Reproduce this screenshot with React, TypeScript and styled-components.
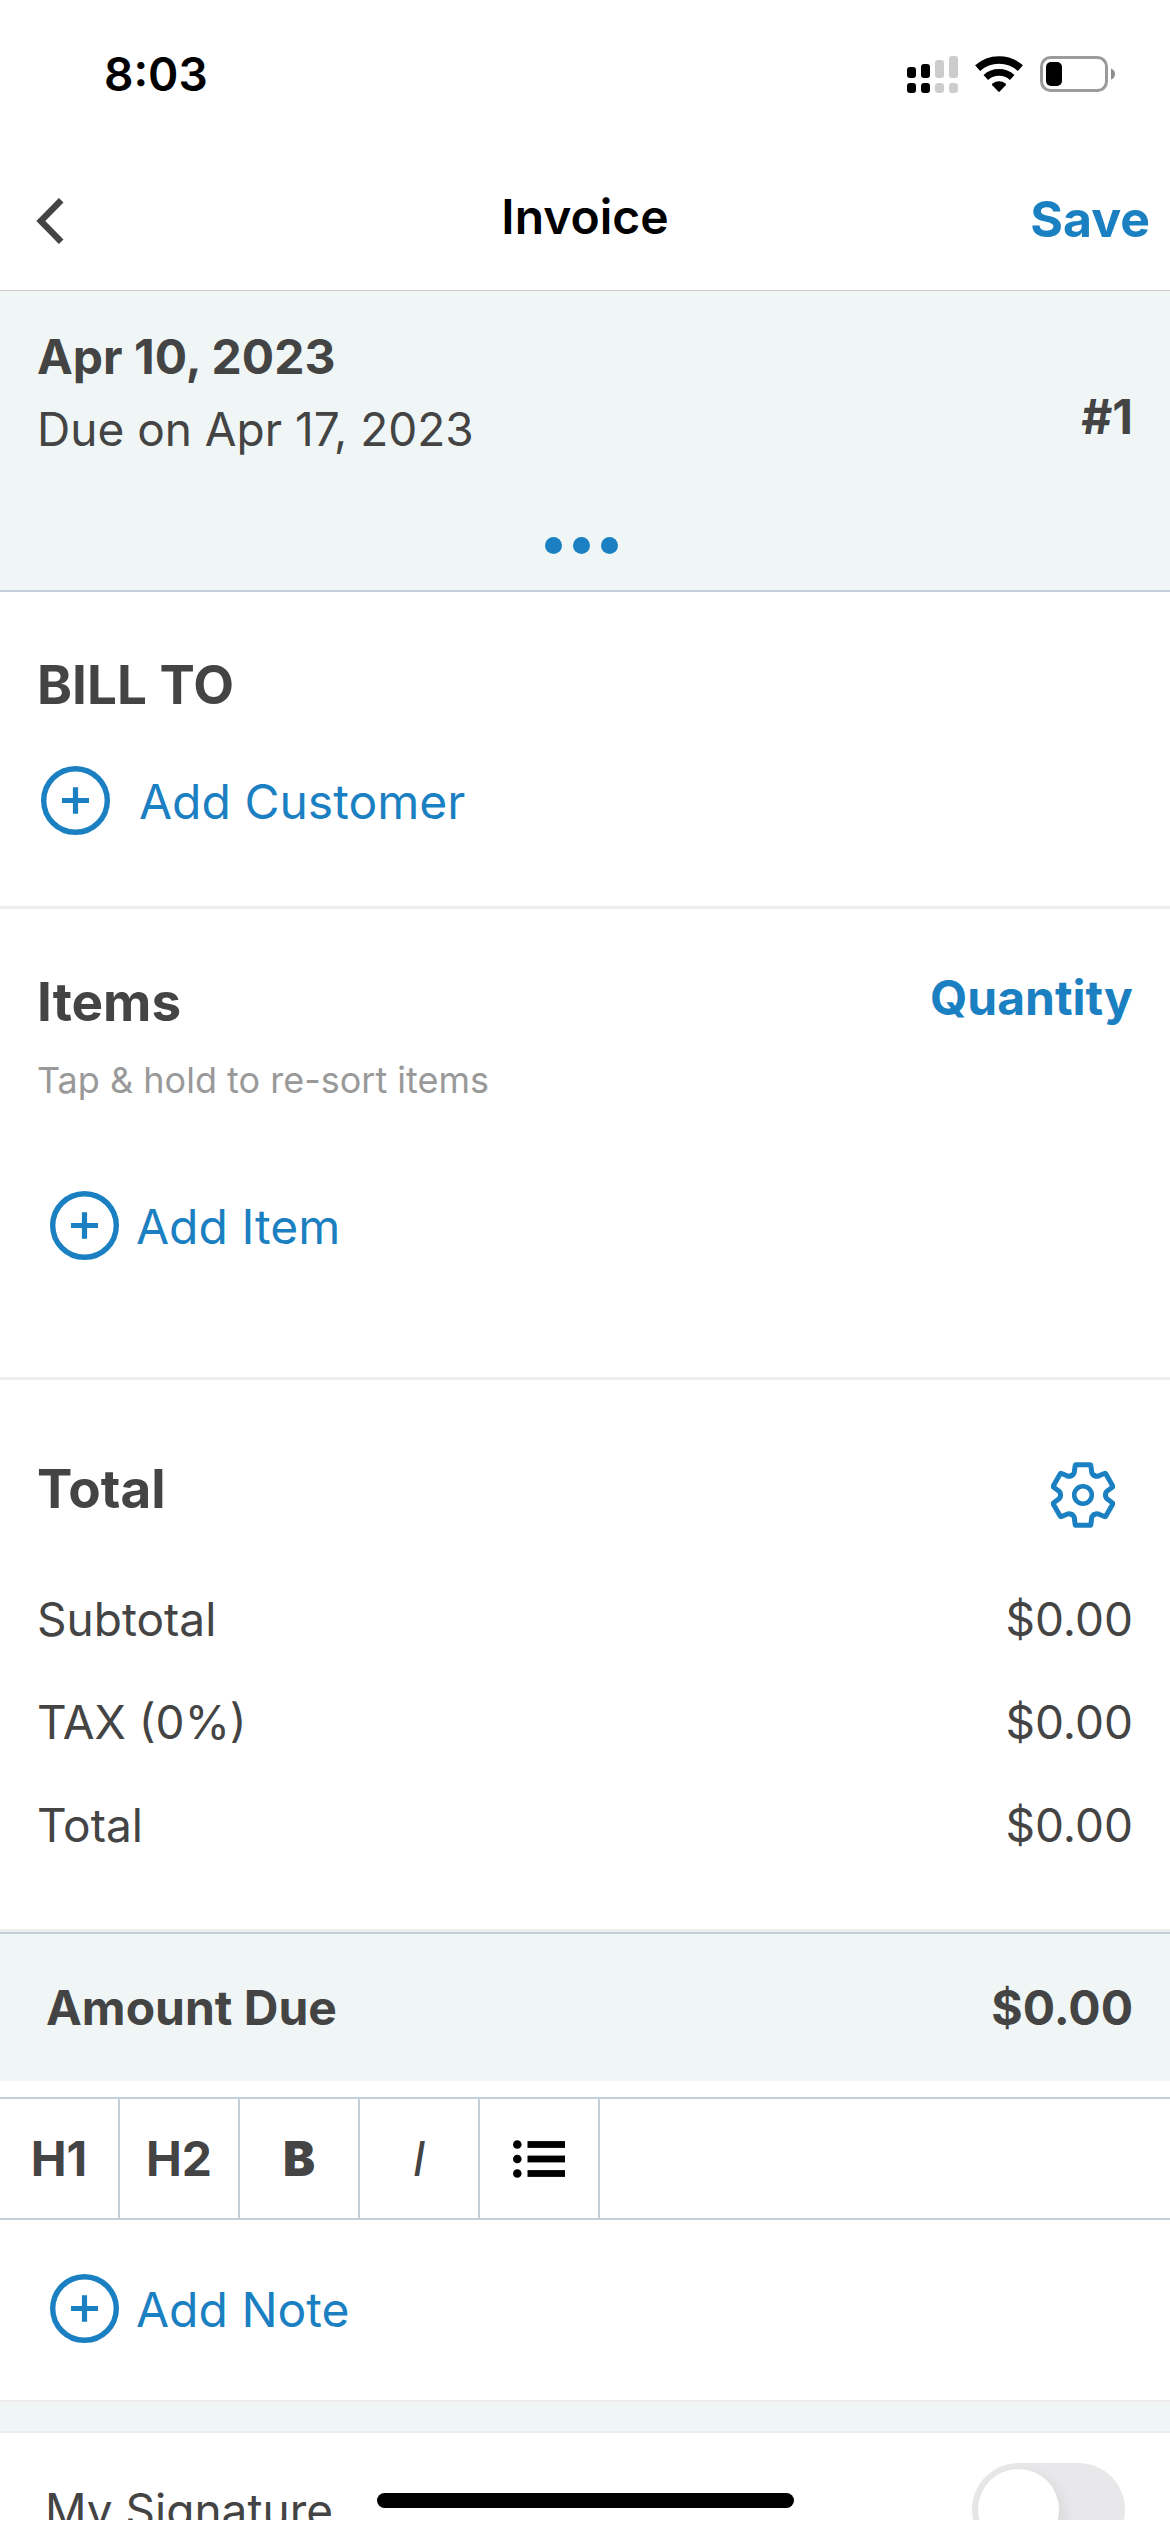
import React, { useState } from "react";
import styled, { createGlobalStyle } from "styled-components";

const color = {
  blue: "#1a80c1",
  text: "#444444",
  muted: "#999999",
  tint: "#f0f6f6",
  rule: "#c4d0d9",
  divider: "#ededed",
};

const GlobalStyle = createGlobalStyle`
  *, *::before, *::after { box-sizing: border-box; }
  body {
    margin: 0;
    background: #ffffff;
    color: ${color.text};
    font-family: Inter, "Liberation Sans", sans-serif;
    font-size: 46px;
  }
  h1, h2, p, dl, dt, dd { margin: 0; }
  button {
    margin: 0;
    padding: 0;
    border: 0;
    background: none;
    color: inherit;
    font: inherit;
    cursor: pointer;
  }
  svg { display: block; flex: none; }
`;

const Screen = styled.div`
  position: relative;
  display: flex;
  flex-direction: column;
  height: 100vh;
  padding-bottom: 12px;
  overflow: hidden;
`;

const StatusBar = styled.div`
  flex: none;
  display: flex;
  align-items: center;
  justify-content: space-between;
  height: 148px;
  padding: 0 55px 0 104px;
  color: #000000;
`;

const Clock = styled.time`
  font-size: 46px;
  font-weight: 600;
`;

const StatusIcons = styled.div`
  display: flex;
  align-items: center;
  gap: 17px;
`;

const NavBar = styled.header`
  flex: none;
  display: grid;
  grid-template-columns: 1fr auto 1fr;
  align-items: center;
  height: 143px;
  padding: 0 20px;
  border-bottom: 1px solid #c5cacb;
`;

const BackButton = styled.button`
  justify-self: start;
  padding: 4px 16px 0;
`;

const Title = styled.h1`
  padding-bottom: 6px;
  color: #000000;
  font-size: 48px;
  font-weight: 600;
`;

const SaveButton = styled.button`
  justify-self: end;
  color: ${color.blue};
  font-size: 50px;
  font-weight: 700;
`;

const Content = styled.main`
  flex: 1;
  min-height: 0;
  overflow: hidden;
`;

const Summary = styled.section`
  padding: 29px 37px 0;
  border-bottom: 2px solid ${color.rule};
  background: ${color.tint};
`;

const SplitRow = styled.div<{ $align?: string }>`
  display: flex;
  align-items: ${(p) => p.$align ?? "center"};
  justify-content: space-between;
`;

const IssueDate = styled.p`
  font-size: 48px;
  font-weight: 700;
  line-height: 73px;
`;

const DueDate = styled.p`
  font-size: 46px;
  line-height: 73px;
`;

const InvoiceNumber = styled.span`
  padding-top: 46px;
  font-size: 48px;
  font-weight: 700;
`;

const MoreButton = styled.button`
  display: flex;
  align-items: center;
  justify-content: center;
  gap: 11px;
  width: 100%;
  height: 124px;
  padding: 34px 8px 0 0;
`;

const Dot = styled.span`
  width: 17px;
  height: 17px;
  border-radius: 50%;
  background: ${color.blue};
`;

const Section = styled.section<{ $top: number; $bottom: number }>`
  padding: ${(p) => p.$top}px 37px ${(p) => p.$bottom}px;
  border-bottom: 3px solid ${color.divider};
`;

const Heading = styled.h2`
  font-size: 53px;
  font-weight: 700;
  line-height: 64px;
`;

const QuantityButton = styled.button`
  padding-bottom: 8px;
  color: ${color.blue};
  font-size: 48px;
  font-weight: 700;
  line-height: 56px;
`;

const Hint = styled.p`
  padding: 22px 0 87px;
  color: ${color.muted};
  font-size: 36px;
  line-height: 48px;
`;

const AddButton = styled.button<{ $gap: number; $inset: number }>`
  display: flex;
  align-items: center;
  gap: ${(p) => p.$gap}px;
  padding-left: ${(p) => p.$inset}px;
  color: ${color.blue};
  font-size: 48px;
  line-height: 64px;
`;

const AddLabel = styled.span`
  padding-top: 2px;
`;

const BillTo = styled.div`
  display: grid;
  justify-items: start;
  gap: 49px;
`;

const SettingsButton = styled.button`
  padding: 5px 18px 0 0;
`;

const Totals = styled.dl`
  padding-top: 39px;
`;

const TotalRow = styled.div`
  display: flex;
  align-items: center;
  justify-content: space-between;
  height: 103px;
`;

const AmountDue = styled.div`
  display: flex;
  align-items: center;
  justify-content: space-between;
  height: 149px;
  padding: 0 37px 0 46px;
  border-top: 2px solid ${color.rule};
  background: ${color.tint};
  font-size: 48px;
  font-weight: 700;
`;

const Toolbar = styled.div`
  display: flex;
  height: 123px;
  margin-top: 16px;
  border: solid ${color.rule};
  border-width: 2px 0;
`;

const ToolButton = styled.button<{ $weight?: number; $italic?: boolean }>`
  display: flex;
  align-items: center;
  justify-content: center;
  width: 120px;
  border-right: 2px solid ${color.rule};
  font-size: 48px;
  font-weight: ${(p) => p.$weight ?? 700};
  font-style: ${(p) => (p.$italic ? "italic" : "normal")};
`;

const NoteSection = styled.section`
  padding: 54px 37px 57px;
`;

const Band = styled.div`
  height: 33px;
  border: solid ${color.divider};
  border-width: 2px 0;
  background: ${color.tint};
`;

const SignatureRow = styled.div`
  display: flex;
  align-items: center;
  justify-content: space-between;
  padding: 30px 45px;
`;

const Switch = styled.input`
  flex: none;
  appearance: none;
  width: 153px;
  height: 93px;
  margin: 0;
  padding: 6px;
  border-radius: 47px;
  background: ${(p) => (p.checked ? color.blue : "#e8e8ea")};
  cursor: pointer;

  &::before {
    content: "";
    display: block;
    width: 81px;
    height: 81px;
    margin-left: ${(p) => (p.checked ? "60px" : "0")};
    border-radius: 50%;
    background: #ffffff;
    box-shadow: 4px 6px 16px rgba(0, 0, 0, 0.08);
  }
`;

const HomeIndicator = styled.div`
  position: absolute;
  bottom: 24px;
  left: 50%;
  width: 417px;
  height: 15px;
  margin-left: -208px;
  border-radius: 8px;
  background: #000000;
`;

const signalBars = [
  { x: 0, top: 11, fill: "#000000" },
  { x: 14, top: 8, fill: "#000000" },
  { x: 28, top: 4, fill: "#cccccc" },
  { x: 42, top: 0, fill: "#cccccc" },
];

const SignalIcon = () => (
  <svg width="51" height="37" viewBox="0 0 51 37" aria-hidden="true">
    {signalBars.map((bar) => (
      <g key={bar.x} fill={bar.fill}>
        <rect x={bar.x} y={bar.top} width="9" height={22 - bar.top} rx="3" />
        <rect x={bar.x} y="27" width="9" height="10" rx="3" />
      </g>
    ))}
  </svg>
);

const WifiIcon = () => (
  <svg width="48" height="37" viewBox="0 0 48 37" aria-hidden="true">
    <g fill="none" stroke="#000000">
      <path d="M2.6 12.2A32 32 0 0 1 45.4 12.2" strokeWidth="7.6" />
      <path d="M10.8 21.4A19.7 19.7 0 0 1 37.2 21.4" strokeWidth="6.8" />
    </g>
    <path d="M17.4 27.6Q24 22.8 30.6 27.6Q31.4 28.4 30.7 29.2L24.7 35.6Q24 36.2 23.3 35.6L17.3 29.2Q16.6 28.4 17.4 27.6Z" />
  </svg>
);

const BatteryIcon = () => (
  <svg width="75" height="37" viewBox="0 0 75 37" aria-hidden="true">
    <rect x="1.5" y="1.5" width="65" height="33" rx="9" fill="none" stroke="#9b9b9b" strokeWidth="3" />
    <rect x="6" y="6" width="16" height="24" rx="5" />
    <path d="M71 12.4Q75 14 75 18T71 23.6Z" fill="#8c8c8c" />
  </svg>
);

const ChevronIcon = () => (
  <svg width="28" height="46" viewBox="0 0 28 46" fill="none" aria-hidden="true">
    <path d="M25.2 2.2L4.8 23L25.2 43.8" stroke={color.text} strokeWidth="6.4" />
  </svg>
);

const PlusCircleIcon = () => (
  <svg width="69" height="69" viewBox="0 0 69 69" fill="none" stroke={color.blue} aria-hidden="true">
    <circle cx="34.5" cy="34.5" r="31.8" strokeWidth="5.4" />
    <path d="M34.5 21.2V47.8M21 34.5H48" strokeWidth="5.2" />
  </svg>
);

/* One sixth of the gear outline: a tooth and half of each valley beside it. */
const gearTooth = "M-11.25 -19.5Q-8.65 -21 -8.6 -23.5L-7.9 -29.2Q-7.8 -30.3 -6.7 -30.3H6.7Q7.8 -30.3 7.9 -29.2L8.6 -23.5Q8.65 -21 11.25 -19.5";

const GearIcon = () => (
  <svg width="64" height="66" viewBox="-32 -33 64 66" fill="none" stroke={color.blue} strokeWidth="5" strokeLinecap="round" aria-hidden="true">
    {[0, 60, 120, 180, 240, 300].map((angle) => (
      <path key={angle} d={gearTooth} transform={`rotate(${angle})`} />
    ))}
    <circle r="8.8" strokeWidth="4.6" />
  </svg>
);

const ListIcon = () => (
  <svg width="52" height="38" viewBox="0 0 52 38" fill="#000000" aria-hidden="true">
    {[4.5, 19, 33.5].map((y) => (
      <g key={y}>
        <circle cx="4.3" cy={y} r="4.3" />
        <rect x="14.5" y={y - 3.4} width="37.5" height="6.8" />
      </g>
    ))}
  </svg>
);

const totals = [
  { label: "Subtotal", value: "$0.00" },
  { label: "TAX (0%)", value: "$0.00" },
  { label: "Total", value: "$0.00" },
];

type AddActionProps = { label: string; gap?: number; inset?: number };

const AddAction = ({ label, gap = 17, inset = 13 }: AddActionProps) => (
  <AddButton type="button" $gap={gap} $inset={inset}>
    <PlusCircleIcon />
    <AddLabel>{label}</AddLabel>
  </AddButton>
);

export default function App() {
  const [signed, setSigned] = useState(false);

  return (
    <Screen>
      <GlobalStyle />
      <StatusBar>
        <Clock>8:03</Clock>
        <StatusIcons>
          <SignalIcon />
          <WifiIcon />
          <BatteryIcon />
        </StatusIcons>
      </StatusBar>

      <NavBar>
        <BackButton type="button" aria-label="Back">
          <ChevronIcon />
        </BackButton>
        <Title>Invoice</Title>
        <SaveButton type="button">Save</SaveButton>
      </NavBar>

      <Content>
        <Summary>
          <SplitRow>
            <div>
              <IssueDate>Apr 10, 2023</IssueDate>
              <DueDate>Due on Apr 17, 2023</DueDate>
            </div>
            <InvoiceNumber>#1</InvoiceNumber>
          </SplitRow>
          <MoreButton type="button" aria-label="More details">
            <Dot />
            <Dot />
            <Dot />
          </MoreButton>
        </Summary>

        <Section $top={61} $bottom={71}>
          <BillTo>
            <Heading>BILL TO</Heading>
            <AddAction label="Add Customer" gap={29} inset={4} />
          </BillTo>
        </Section>

        <Section $top={61} $bottom={117}>
          <SplitRow>
            <Heading>Items</Heading>
            <QuantityButton type="button">Quantity</QuantityButton>
          </SplitRow>
          <Hint>Tap &amp; hold to re-sort items</Hint>
          <AddAction label="Add Item" />
        </Section>

        <Section $top={77} $bottom={53}>
          <SplitRow $align="flex-start">
            <Heading>Total</Heading>
            <SettingsButton type="button" aria-label="Total settings">
              <GearIcon />
            </SettingsButton>
          </SplitRow>
          <Totals>
            {totals.map((row) => (
              <TotalRow key={row.label}>
                <dt>{row.label}</dt>
                <dd>{row.value}</dd>
              </TotalRow>
            ))}
          </Totals>
        </Section>

        <AmountDue>
          <span>Amount Due</span>
          <span>$0.00</span>
        </AmountDue>

        <Toolbar role="toolbar" aria-label="Note formatting">
          <ToolButton type="button">H1</ToolButton>
          <ToolButton type="button">H2</ToolButton>
          <ToolButton type="button" $weight={900}>B</ToolButton>
          <ToolButton type="button" $weight={400} $italic>I</ToolButton>
          <ToolButton type="button" aria-label="Bulleted list">
            <ListIcon />
          </ToolButton>
        </Toolbar>

        <NoteSection>
          <AddAction label="Add Note" />
        </NoteSection>
        <Band />

        <SignatureRow>
          <label htmlFor="signature">My Signature</label>
          <Switch
            id="signature"
            type="checkbox"
            checked={signed}
            onChange={(event) => setSigned(event.target.checked)}
          />
        </SignatureRow>
      </Content>
      <HomeIndicator />
    </Screen>
  );
}
